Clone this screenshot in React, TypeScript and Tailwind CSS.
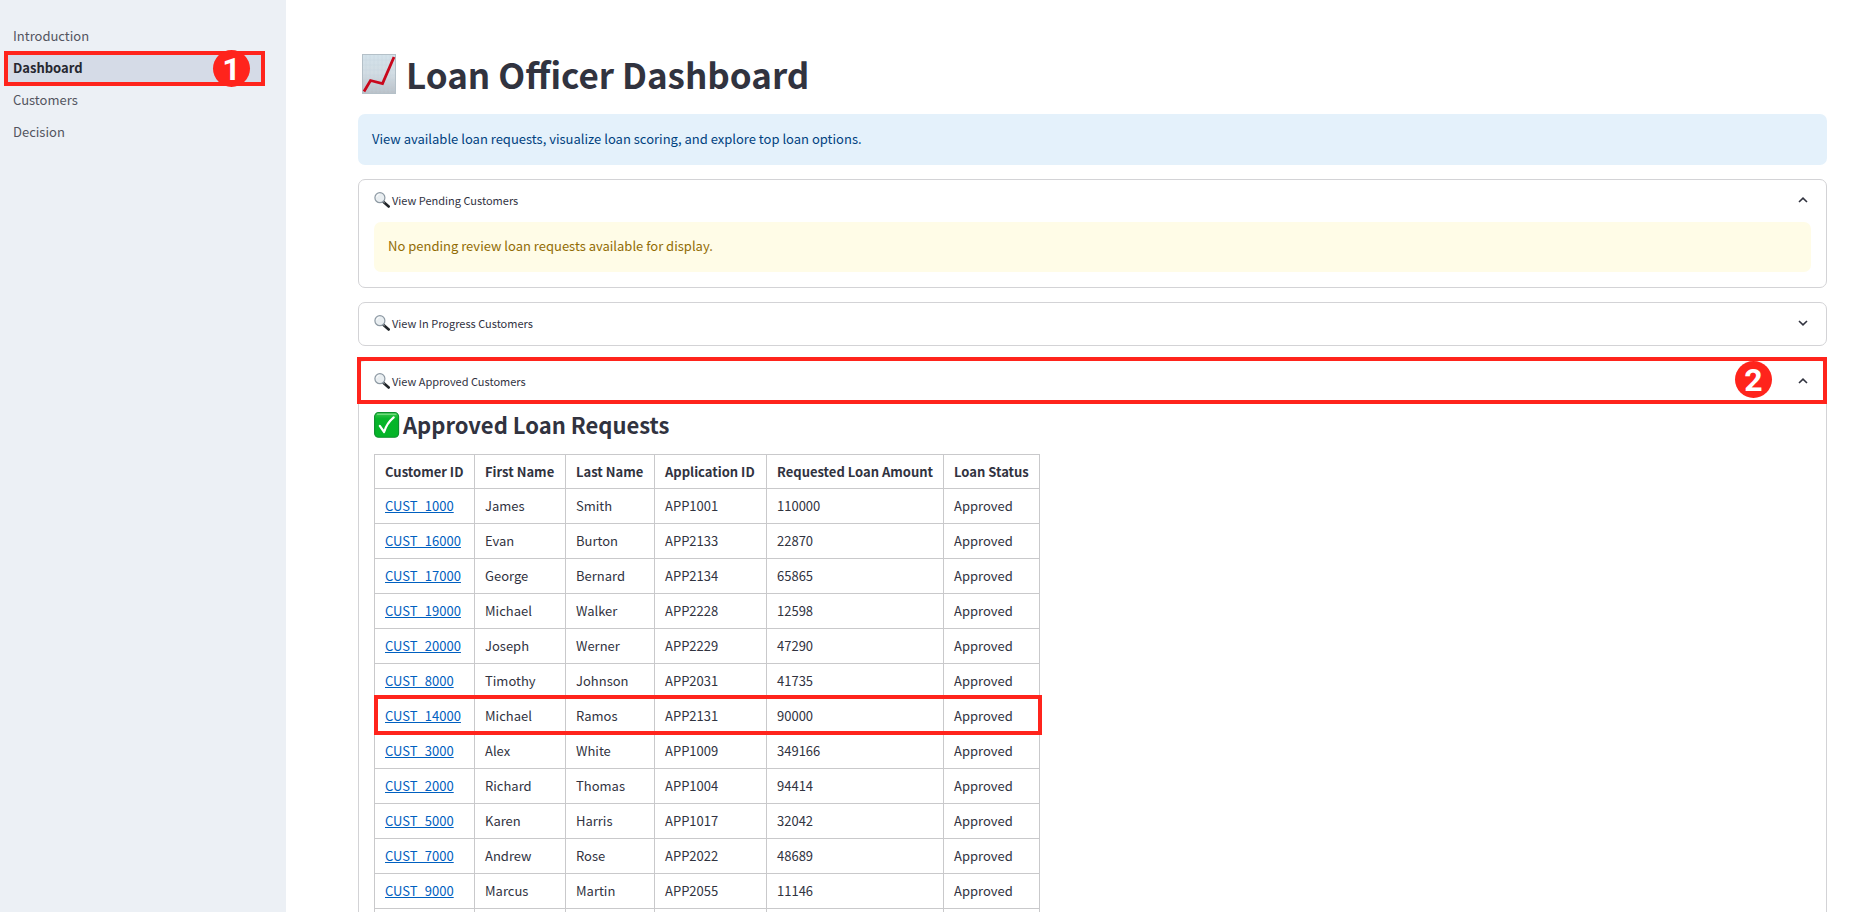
import { useState } from "react";
import type { ReactNode } from "react";

const pages = ["Introduction", "Dashboard", "Customers", "Decision"];

const columns = [
  { label: "Customer ID", width: "w-[100px]" },
  { label: "First Name", width: "w-[91px]" },
  { label: "Last Name", width: "w-[89px]" },
  { label: "Application ID", width: "w-[112px]" },
  { label: "Requested Loan Amount", width: "w-[177px]" },
  { label: "Loan Status", width: "w-[96px]" },
];

const loans = [
  ["CUST_1000", "James", "Smith", "APP1001", "110000"],
  ["CUST_16000", "Evan", "Burton", "APP2133", "22870"],
  ["CUST_17000", "George", "Bernard", "APP2134", "65865"],
  ["CUST_19000", "Michael", "Walker", "APP2228", "12598"],
  ["CUST_20000", "Joseph", "Werner", "APP2229", "47290"],
  ["CUST_8000", "Timothy", "Johnson", "APP2031", "41735"],
  ["CUST_14000", "Michael", "Ramos", "APP2131", "90000"],
  ["CUST_3000", "Alex", "White", "APP1009", "349166"],
  ["CUST_2000", "Richard", "Thomas", "APP1004", "94414"],
  ["CUST_5000", "Karen", "Harris", "APP1017", "32042"],
  ["CUST_7000", "Andrew", "Rose", "APP2022", "48689"],
  ["CUST_9000", "Marcus", "Martin", "APP2055", "11146"],
];

function ChartIcon() {
  return (
    <svg viewBox="0 0 34 40" className="h-10 w-[34px] shrink-0" aria-hidden="true">
      <defs>
        <linearGradient id="paper" x1="0" y1="0" x2="0" y2="1">
          <stop offset="0" stopColor="#d3e2ea" />
          <stop offset="0.5" stopColor="#d2dce3" />
          <stop offset="1" stopColor="#b9c0c7" />
        </linearGradient>
      </defs>
      <rect x="0.5" y="0.5" width="33" height="39" fill="url(#paper)" stroke="#b4c0c8" />
      <path
        d="M4 1v38M8 1v38M12 1v38M16 1v38M20 1v38M24 1v38M28 1v38M1 6h32M1 11h32M1 16h32M1 21h32M1 26h32M1 31h32M1 36h32"
        stroke="#c3d3dd"
        strokeWidth="0.5"
        opacity="0.6"
      />
      <path d="M2 37.5L8.5 26.5L20.500 29.5L32 3" fill="none" stroke="#c9081c" strokeWidth="2.8" />
    </svg>
  );
}

function MagnifierIcon() {
  return (
    <svg viewBox="0 0 16 16" className="size-4 shrink-0" aria-hidden="true">
      <path d="M9.300 9.700L14.700 14.500" stroke="#22262a" strokeWidth="2.600" strokeLinecap="round" />
      <path d="M9 9.200L10.800 10.900" stroke="#6d757b" strokeWidth="1.400" />
      <circle cx="5.900" cy="5.700" r="5" fill="#e9eef1" stroke="#8d99a3" strokeWidth="1.200" />
      <path d="M2.600 5.200a3.500 3.500 0 0 1 3-3" fill="none" stroke="#fff" strokeWidth="0.900" />
    </svg>
  );
}

function CheckIcon() {
  return (
    <svg viewBox="0 0 26 26" className="size-[26px] shrink-0" aria-hidden="true">
      <defs>
        <linearGradient id="check" x1="0" y1="0" x2="0" y2="1">
          <stop offset="0" stopColor="#3cc94e" />
          <stop offset="0.25" stopColor="#06b52a" />
          <stop offset="1" stopColor="#04b428" />
        </linearGradient>
      </defs>
      <rect x="0.600" y="0.600" width="24" height="24.600" rx="4" fill="url(#check)" stroke="#0b8f2b" strokeWidth="1.100" />
      <path d="M3.500 2.200h18.500" stroke="#8be596" strokeWidth="1" strokeLinecap="round" />
      <path d="M5.800 13.800l4.300 6.200c1.800-6 5-10.800 9.600-14.600" fill="none" stroke="#fff" strokeWidth="2.200" strokeLinecap="round" strokeLinejoin="round" />
    </svg>
  );
}

function Chevron({ open }: { open: boolean }) {
  return (
    <svg viewBox="0 0 10 6" className="mr-[3px] h-[6px] w-[10px] shrink-0" aria-hidden="true">
      <path d={open ? "M1 5L5 1.200L9 5" : "M1 1L5 4.800L9 1"} fill="none" stroke="#31333f" strokeWidth="1.600" />
    </svg>
  );
}

function StepBadge({ step, className }: { step: number; className: string }) {
  return (
    <span
      className={`absolute flex size-[37px] items-center justify-center rounded-full bg-[#ff241c] font-[Roboto,sans-serif] text-[32px] leading-none font-bold text-white ${className}`}
    >
      {step}
    </span>
  );
}

function Expander({ title, startOpen, step, children }: { title: string; startOpen: boolean; step?: number; children?: ReactNode }) {
  const [open, setOpen] = useState(startOpen);
  return (
    <section className="rounded-[7px] border border-[#d3d3d6]">
      <h2 className="relative">
        <button
          type="button"
          aria-expanded={open}
          onClick={() => setOpen(!open)}
          className="flex h-[42px] w-full items-center gap-[2px] px-[15px] pb-[2px] text-left text-[11px]"
        >
          <MagnifierIcon />
          <span className="grow">{title}</span>
          <Chevron open={open} />
        </button>
        {step && (
          <span className="pointer-events-none absolute -top-[4px] -right-px -bottom-px -left-[2px] border-4 border-[#ff241c]">
            <StepBadge step={step} className="top-0 right-[51px]" />
          </span>
        )}
      </h2>
      {open && children}
    </section>
  );
}

export default function App() {
  return (
    <div className="flex h-screen overflow-hidden bg-white font-['Noto_Sans_CJK_SC',sans-serif] text-[#31333f]">
      <aside className="w-[286px] shrink-0 bg-[#ecf0f5] pt-[22px]">
        <nav className="flex flex-col gap-1 pr-[23px] pl-[6px]">
          {pages.map((page) => {
            const current = page === "Dashboard";
            return (
              <a
                key={page}
                href={`#${page.toLowerCase()}`}
                aria-current={current ? "page" : undefined}
                className={`relative flex h-7 items-center px-[7px] text-[13px] ${current ? "bg-[#d5dbe7] font-bold text-[#262730]" : "text-[#53555f]"}`}
              >
                {page}
                {current && (
                  <span className="pointer-events-none absolute -inset-x-[2px] -top-[3px] -bottom-[4px] border-4 border-[#ff241c]">
                    <StepBadge step={1} className="-top-[5px] right-[11px]" />
                  </span>
                )}
              </a>
            );
          })}
        </nav>
      </aside>

      <main className="min-w-0 grow overflow-y-auto pt-12 pr-10 pl-[72px] [scrollbar-width:none]">
        <h1 className="flex h-[52px] items-center gap-[10px] pl-1 text-[35px] leading-none font-bold">
          <ChartIcon />
          <span className="pb-[2px]">Loan Officer Dashboard</span>
        </h1>

        <div className="mt-[14px] flex flex-col gap-[14px] pb-10">
          <p className="flex h-[51px] items-center rounded-[7px] bg-[#e4f1fb] px-[14px] pb-[2px] text-[13px] text-[#004280]">
            View available loan requests, visualize loan scoring, and explore top loan options.
          </p>

          <Expander title="View Pending Customers" startOpen>
            <div className="px-[15px] pb-[15px]">
              <p className="flex h-[50px] items-center rounded-[7px] bg-[#fffce7] px-[14px] pb-[2px] text-[13px] text-[#926c05]">
                No pending review loan requests available for display.
              </p>
            </div>
          </Expander>

          <Expander title="View In Progress Customers" startOpen={false} />

          <Expander title="View Approved Customers" startOpen step={2}>
            <div className="px-[15px] pb-[15px]">
              <h3 className="flex h-[44px] items-center gap-[3px] text-[22px] leading-none font-bold">
                <CheckIcon />
                <span className="pb-[2px]">Approved Loan Requests</span>
              </h3>
              <table className="mt-[7px] w-[666px] table-fixed border-collapse text-[13px]">
                <thead>
                  <tr className="h-[34px]">
                    {columns.map((column) => (
                      <th key={column.label} className={`border border-[#c9c9cb] px-[10px] text-left font-bold whitespace-nowrap ${column.width}`}>
                        {column.label}
                      </th>
                    ))}
                  </tr>
                </thead>
                <tbody>
                  {[...loans, ["", "", "", "", ""]].map(([id, first, last, application, amount], index) => (
                    <tr key={index} className="relative h-[35px]">
                      <td className="border border-[#c9c9cb] px-[10px]">
                        <a href={`#${id}`} className="text-[#0060c0] underline">
                          {id}
                        </a>
                        {id === "CUST_14000" && (
                          <span className="pointer-events-none absolute -top-[4px] -right-[2px] -bottom-px -left-px border-4 border-[#ff241c]" />
                        )}
                      </td>
                      <td className="border border-[#c9c9cb] px-[10px]">{first}</td>
                      <td className="border border-[#c9c9cb] px-[10px]">{last}</td>
                      <td className="border border-[#c9c9cb] px-[10px]">{application}</td>
                      <td className="border border-[#c9c9cb] px-[10px]">{amount}</td>
                      <td className="border border-[#c9c9cb] px-[10px]">{id && "Approved"}</td>
                    </tr>
                  ))}
                </tbody>
              </table>
            </div>
          </Expander>
        </div>
      </main>
    </div>
  );
}
